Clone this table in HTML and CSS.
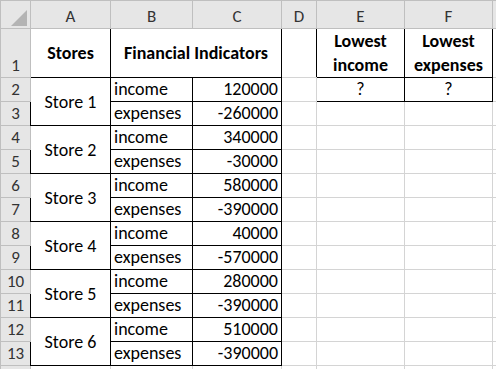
FILE: index.html
```html
<!DOCTYPE html>
<html lang="en">
<head>
    <meta charset="UTF-8">
    <meta name="viewport" content="width=device-width, initial-scale=1.0">
    <title>Stores - Financial Indicators</title>
    <link rel="stylesheet" href="styles.css">
</head>
<body>
    <table class="sheet">
        <colgroup>
            <col class="w-hd">
            <col class="w-a">
            <col class="w-b">
            <col class="w-c">
            <col class="w-d">
            <col class="w-e">
            <col class="w-f">
            <col class="w-g">
        </colgroup>
        <thead>
            <tr class="r-head">
                <th class="corner"><span class="corner-mark"></span></th>
                <th>A</th>
                <th>B</th>
                <th>C</th>
                <th>D</th>
                <th>E</th>
                <th>F</th>
                <th></th>
            </tr>
        </thead>
        <tbody>
            <tr class="r-tall">
                <th>1</th>
                <td class="box bold mid center">Stores</td>
                <td class="box bold mid center" colspan="2">Financial Indicators</td>
                <td class="edge-r"></td>
                <td class="box bold mid center wrap">Lowest<br>income</td>
                <td class="box bold mid center wrap">Lowest<br>expenses</td>
                <td></td>
            </tr>
            <tr>
                <th>2</th>
                <td class="box mid center" rowspan="2">Store 1</td>
                <td class="box">income</td>
                <td class="box num">120000</td>
                <td></td>
                <td class="box center">?</td>
                <td class="box center">?</td>
                <td></td>
            </tr>
            <tr>
                <th>3</th>
                <td class="box">expenses</td>
                <td class="box num">-260000</td>
                <td></td><td></td><td></td><td></td>
            </tr>
            <tr>
                <th>4</th>
                <td class="box mid center" rowspan="2">Store 2</td>
                <td class="box">income</td>
                <td class="box num">340000</td>
                <td></td><td></td><td></td><td></td>
            </tr>
            <tr>
                <th>5</th>
                <td class="box">expenses</td>
                <td class="box num">-30000</td>
                <td></td><td></td><td></td><td></td>
            </tr>
            <tr>
                <th>6</th>
                <td class="box mid center" rowspan="2">Store 3</td>
                <td class="box">income</td>
                <td class="box num">580000</td>
                <td></td><td></td><td></td><td></td>
            </tr>
            <tr>
                <th>7</th>
                <td class="box">expenses</td>
                <td class="box num">-390000</td>
                <td></td><td></td><td></td><td></td>
            </tr>
            <tr>
                <th>8</th>
                <td class="box mid center" rowspan="2">Store 4</td>
                <td class="box">income</td>
                <td class="box num">40000</td>
                <td></td><td></td><td></td><td></td>
            </tr>
            <tr>
                <th>9</th>
                <td class="box">expenses</td>
                <td class="box num">-570000</td>
                <td></td><td></td><td></td><td></td>
            </tr>
            <tr>
                <th>10</th>
                <td class="box mid center" rowspan="2">Store 5</td>
                <td class="box">income</td>
                <td class="box num">280000</td>
                <td></td><td></td><td></td><td></td>
            </tr>
            <tr>
                <th>11</th>
                <td class="box">expenses</td>
                <td class="box num">-390000</td>
                <td></td><td></td><td></td><td></td>
            </tr>
            <tr>
                <th>12</th>
                <td class="box mid center" rowspan="2">Store 6</td>
                <td class="box">income</td>
                <td class="box num">510000</td>
                <td></td><td></td><td></td><td></td>
            </tr>
            <tr>
                <th>13</th>
                <td class="box">expenses</td>
                <td class="box num">-390000</td>
                <td></td><td></td><td></td><td></td>
            </tr>
            <tr>
                <th></th>
                <td></td><td></td><td></td><td></td><td></td><td></td><td></td>
            </tr>
        </tbody>
    </table>
</body>
</html>
```

FILE: styles.css
```css
body {
    margin: 0;
    background-color: #ffffff;
    overflow: hidden;
    font-family: Calibri, Lato, sans-serif;
    color: #000000;
}

.sheet {
    border-collapse: collapse;
    table-layout: fixed;
    width: 532px;
    font-size: 18px;
}

/* column widths */
.w-hd { width: 30px; }
.w-a { width: 80px; }
.w-b { width: 82px; }
.w-c { width: 89px; }
.w-d { width: 35px; }
.w-e { width: 88px; }
.w-f { width: 88px; }
.w-g { width: 40px; }

tr { height: 24px; }
.r-head { height: 28px; }
.r-tall { height: 48px; }

td {
    border: 1px solid #d4d4d4;
    padding: 0 3px 2px 3px;
    line-height: 20px;
    vertical-align: bottom;
    white-space: nowrap;
    overflow: hidden;
}

/* row and column headers */
th {
    background-color: #e6e6e6;
    border: 1px solid #bfbfbf;
    color: #333333;
    font-weight: normal;
    font-size: 17px;
    line-height: 20px;
    padding: 0 0 1px 0;
    text-align: center;
    vertical-align: bottom;
}

.corner {
    text-align: right;
    padding: 0 3px 2px 0;
    line-height: 0;
}

.corner-mark {
    display: inline-block;
    width: 16px;
    height: 16px;
    background-color: #b4b4b4;
    clip-path: polygon(100% 0, 100% 100%, 0 100%);
}

/* black bordered data cells */
.box {
    border: 1px solid #000000;
}

.edge-r {
    border-right: 1px solid #000000;
}

.bold {
    font-weight: bold;
}

.center {
    text-align: center;
}

.mid {
    vertical-align: middle;
    padding-bottom: 0;
}

.wrap {
    white-space: normal;
    line-height: 24px;
}

.num {
    text-align: right;
}
```
